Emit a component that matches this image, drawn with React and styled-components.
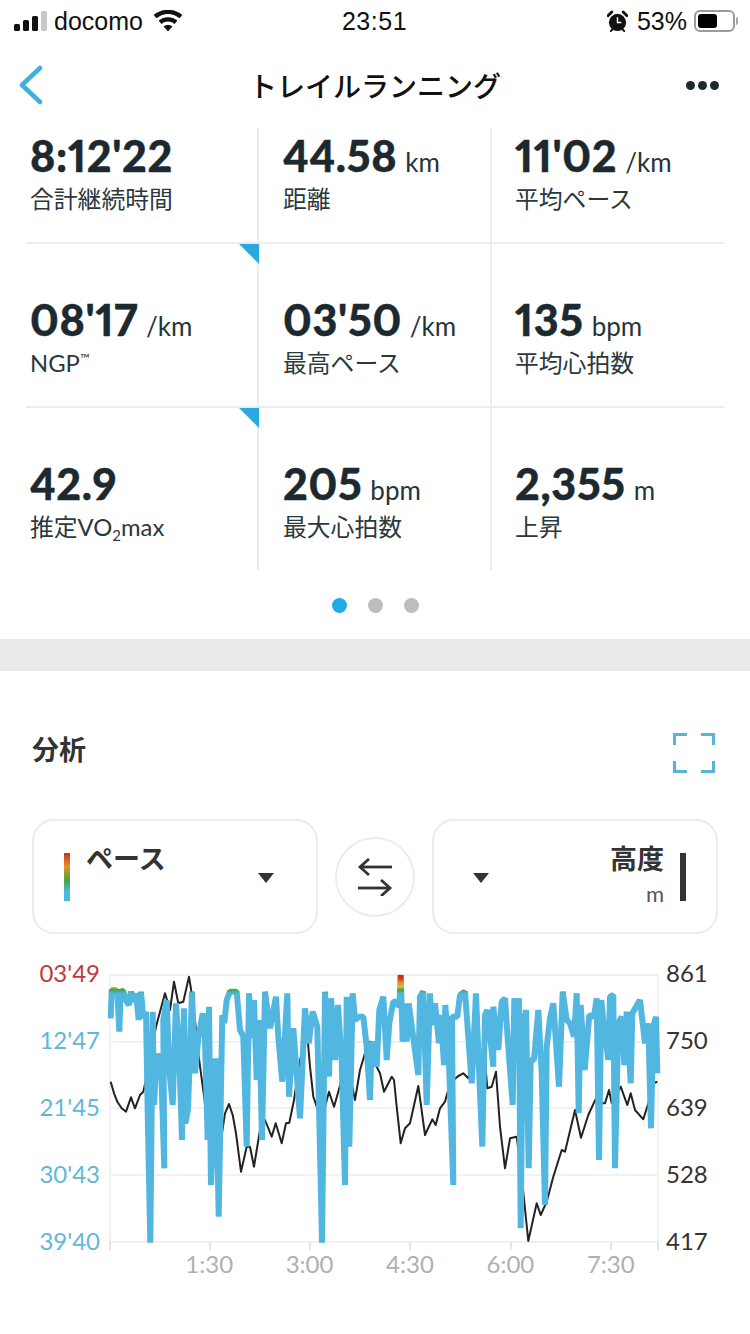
import styled, { createGlobalStyle } from "styled-components"

const GlobalStyle = createGlobalStyle`
    html, body {
        margin: 0;
        padding: 0;
        background: #fff;
    }
    * {
        box-sizing: border-box;
    }
`

const SANS = `Lato, "Noto Sans CJK JP", sans-serif`
const CJK = `"Noto Sans CJK JP", sans-serif`

const Page = styled.div`
    width: 750px;
    height: 1334px;
    overflow: hidden;
    background: #fff;
    font-family: ${SANS};
    color: #1c2a30;
`

const StatusBar = styled.div`
    height: 42px;
    display: grid;
    grid-template-columns: 1fr auto 1fr;
    align-items: center;
    padding: 0 15px 0 14px;
    font-family: "Liberation Sans", sans-serif;
    font-size: 25px;
    color: #111;
`
const StatusLeft = styled.div`
    display: flex;
    align-items: center;
`
const StatusRight = styled.div`
    display: flex;
    align-items: center;
    justify-content: flex-end;
`
const Signal = styled.div`
    display: flex;
    align-items: flex-end;
    gap: 3px;
    height: 20px;
    margin-right: 7px;
`
const SignalBar = styled.span`
    width: 6px;
    height: ${(p) => p.$h}px;
    border-radius: 1.5px;
    background: ${(p) => (p.$off ? "#c8c8c8" : "#111")};
`
const Carrier = styled.span`
    margin-right: 10px;
`
const Clock = styled.span`
    font-weight: 500;
    letter-spacing: 0.5px;
`
const Percent = styled.span`
    margin: 0 7px 0 9px;
`
const Battery = styled.div`
    position: relative;
    width: 41px;
    height: 22px;
    border: 2px solid #9a9a9a;
    border-radius: 6px;
    padding: 2px;
    &::after {
        content: "";
        position: absolute;
        right: -5px;
        top: 5px;
        width: 2px;
        height: 8px;
        border-radius: 0 2px 2px 0;
        background: #aaa;
    }
`
const BatteryFill = styled.div`
    width: 19px;
    height: 100%;
    border-radius: 3px;
    background: #000;
`

const NavBar = styled.div`
    height: 86px;
    display: grid;
    grid-template-columns: 1fr auto 1fr;
    align-items: center;
    padding: 0 31px;
    & > svg {
        margin-left: -13px;
    }
`
const NavEnd = styled.div`
    display: flex;
    justify-content: flex-end;
`
const NavTitle = styled.div`
    font-family: ${CJK};
    font-size: 28px;
    font-weight: 500;
    color: #111;
`
const MoreDots = styled.div`
    display: flex;
    gap: 3px;
    & span {
        width: 9px;
        height: 9px;
        border-radius: 50%;
        background: #1c2a30;
    }
`

const Grid = styled.div`
    margin: 0 26px;
`
const Row = styled.div`
    display: grid;
    grid-template-columns: 233px 233px 232px;
    height: ${(p) => p.$h}px;
    border-bottom: ${(p) => (p.$last ? "none" : "2px solid #ececec")};
`
const Cell = styled.div`
    position: relative;
    display: flex;
    flex-direction: column;
    justify-content: flex-end;
    padding: 0 0 ${(p) => p.$pb}px ${(p) => (p.$first ? 4 : p.$end ? 23 : 24)}px;
    border-right: ${(p) => (p.$end ? "none" : "2px solid #ececec")};
`
const Corner = styled.div`
    position: absolute;
    top: 0;
    right: -2px;
    width: 20px;
    height: 20px;
    background: #2aa9e0;
    clip-path: polygon(0 0, 100% 0, 100% 100%);
`
const ValueLine = styled.div`
    display: flex;
    align-items: baseline;
    gap: 8px;
    height: 44px;
    line-height: 44px;
    margin-bottom: 5px;
`
const Value = styled.span`
    font-size: 43px;
    font-weight: 900;
    letter-spacing: 0.7px;
    font-variant-numeric: proportional-nums;
    -webkit-text-stroke: 0.4px #1c2a30;
`
const Unit = styled.span`
    font-size: 26px;
    color: #26343a;
`
const Label = styled.div`
    font-size: 23.8px;
    line-height: 32px;
    color: #2b383d;
    & sup {
        font-size: 13px;
        line-height: 0;
        vertical-align: 9px;
    }
    & sub {
        font-size: 15px;
        line-height: 0;
        vertical-align: -5px;
    }
`

const Pager = styled.div`
    height: 69px;
    display: flex;
    align-items: center;
    justify-content: center;
    gap: 21px;
    padding-top: 1px;
`
const PagerDot = styled.span`
    width: 15px;
    height: 15px;
    border-radius: 50%;
    background: ${(p) => (p.$active ? "#23a9e6" : "#bdbdbd")};
`
const Band = styled.div`
    height: 32px;
    background: #ebebeb;
`

const SectionHead = styled.div`
    height: 149px;
    display: flex;
    align-items: center;
    justify-content: space-between;
    padding: 17px 35px 11px 32px;
    & svg {
        margin-top: 8px;
    }
`
const SectionTitle = styled.div`
    font-family: ${CJK};
    font-size: 27px;
    font-weight: 700;
    color: #333;
`

const Selectors = styled.div`
    display: flex;
    align-items: center;
    gap: 17px;
    padding: 0 32px;
    margin-top: -1px;
`
const SelectCard = styled.div`
    flex: 1;
    height: 115px;
    display: flex;
    align-items: center;
    gap: 16px;
    padding: 0 30px;
    border: 2px solid #ececec;
    border-radius: 22px;
    color: #333;
`
const ColorBar = styled.div`
    flex: none;
    width: ${(p) => p.$w}px;
    height: 48px;
    background: ${(p) =>
        p.$pace
            ? "linear-gradient(#c8301e 0%, #e8902a 28%, #3fa648 58%, #4cb8dc 80%)"
            : "#333"};
`
const SelectText = styled.div`
    flex: 1;
    height: 62px;
    margin-bottom: 2px;
    display: flex;
    flex-direction: column;
    justify-content: space-between;
    text-align: ${(p) => (p.$right ? "right" : "left")};
`
const SelectName = styled.div`
    font-family: ${CJK};
    font-size: 27px;
    line-height: 26px;
    font-weight: 700;
`
const SelectUnit = styled.div`
    font-size: 22px;
    line-height: 26px;
    color: #555;
`
const Caret = styled.div`
    flex: none;
    width: 0;
    height: 0;
    margin: 2px ${(p) => (p.$right ? 12 : 0)}px 0 ${(p) => (p.$left ? 9 : 0)}px;
    border-left: 8px solid transparent;
    border-right: 8px solid transparent;
    border-top: 10px solid #333;
`
const SwapButton = styled.div`
    flex: none;
    width: 80px;
    height: 80px;
    display: flex;
    align-items: center;
    justify-content: center;
    border: 2px solid #ececec;
    border-radius: 50%;
`

const ChartRow = styled.div`
    display: flex;
    margin-top: 26px;
    height: 300px;
`
const AxisLabels = styled.div`
    flex: none;
    width: ${(p) => (p.$side === "left" ? 100 : 84)}px;
    height: 298px;
    margin-top: -2px;
    display: flex;
    flex-direction: column;
    justify-content: space-between;
    align-items: ${(p) => (p.$side === "left" ? "flex-end" : "flex-start")};
    font-size: 24px;
    line-height: 30px;
`
const AxisLabel = styled.span`
    color: ${(p) => p.$color};
`
const ChartSvg = styled.svg`
    flex: none;
    display: block;
    margin: 0 3px 0 5px;
`
const TimeAxis = styled.div`
    display: flex;
    padding-left: 159px;
    margin-top: -11px;
`
const TimeLabel = styled.span`
    width: 100.4px;
    text-align: center;
    font-size: 24px;
    line-height: 30px;
    color: #b0b0b0;
`

const ChevronIcon = () => (
    <svg width="26" height="40" viewBox="0 0 26 40" fill="none">
        <path d="M22 3 L4 20 L22 37" stroke="#3fb0dc" strokeWidth="4.5" strokeLinecap="round" strokeLinejoin="round" />
    </svg>
)

const WifiIcon = () => (
    <svg width="30" height="22" viewBox="0 0 30 22" fill="#111">
        <path d="M15 21.5 L10.6 16.4 C13 14.4 17 14.4 19.4 16.4 Z" />
        <path d="M8.4 13.9 L5.6 10.6 C10.8 6.1 19.2 6.1 24.4 10.6 L21.6 13.9 C17.7 10.6 12.3 10.6 8.4 13.9 Z" />
        <path d="M3.6 8.3 L0.6 4.9 C8.6 -1.9 21.4 -1.9 29.4 4.9 L26.4 8.3 C19.8 2.6 10.2 2.6 3.6 8.3 Z" />
    </svg>
)

const AlarmIcon = () => (
    <svg width="21" height="23" viewBox="0 0 22 24">
        <circle cx="11" cy="13" r="9" fill="#111" />
        <path d="M1 6 L5 2 M21 6 L17 2" stroke="#111" strokeWidth="3" strokeLinecap="round" />
        <path d="M4 22 L6 20 M18 22 L16 20" stroke="#111" strokeWidth="2" strokeLinecap="round" />
        <path d="M11 7.5 V13 H15" stroke="#fff" strokeWidth="1.5" fill="none" />
    </svg>
)

const ExpandIcon = () => (
    <svg width="42" height="40" viewBox="0 0 42 40" fill="none" stroke="#56b4d8" strokeWidth="3">
        <path d="M1.5 12 V1.5 H14" />
        <path d="M28 1.5 H40.5 V12" />
        <path d="M1.5 28 V38.5 H14" />
        <path d="M28 38.5 H40.5 V28" />
    </svg>
)

const SwapIcon = () => (
    <svg width="36" height="38" viewBox="0 0 36 38" fill="none" stroke="#333" strokeWidth="2.8">
        <path d="M35 9 H3" />
        <path d="M12 1 L3 9 L12 17" />
        <path d="M1 30 H33" />
        <path d="M24 22 L33 30 L24 38" />
    </svg>
)

// traced off the reference: [x, y] at 3x, first list from x=30, second from x=370
const BLUE_A = [242,175,245,90,255,90,262,95,268,215,272,90,280,95,290,125,297,135,303,95,310,125,318,100,326,180,333,95,340,175,348,155,354,505,361,848,368,155,372,435,380,280,386,330,392,280,403,625,400,180,410,120,418,330,428,435,438,130,447,260,456,540,462,145,466,490,474,450,486,95,495,340,505,235,518,160,525,240,533,540,537,140,543,675,557,295,566,770,577,165,583,190,590,120,600,95,620,95,630,210,640,230,650,560,657,100,665,235,672,120,680,360,688,180,696,540,705,95,720,205,738,110,745,230,757,365,772,100,777,410,790,205,810,475,825,145,836,250,848,155,862,200,876,848,885,95,897,350,903,115,915,300,924,135,935,305,945,675,950,110,958,560,968,100,975,180,988,170,1000,170,1010,260,1020,420]
const BLUE_B = [5,245,20,320,28,150,40,110,50,300,58,190,70,125,78,125,88,140,92,45,98,245,105,130,110,245,116,130,128,220,145,345,150,110,160,95,170,435,180,100,185,195,195,130,207,250,213,165,222,315,226,135,235,250,250,675,246,170,262,170,270,105,285,95,305,370,318,100,325,280,337,560,345,165,352,150,370,320,370,140,385,270,395,125,405,115,415,260,428,435,433,115,440,230,447,115,452,805,458,210,468,150,476,625,482,300,492,300,505,150,515,340,525,735,530,260,540,175,550,130,567,380,578,95,590,180,600,190,612,230,620,100,626,460,632,135,644,330,658,165,672,170,680,115,687,600,694,120,700,180,715,300,720,110,730,105,735,625,745,190,755,170,763,315,770,155,782,370,787,160,810,120,825,250,835,190,843,505,850,200,858,170,862,340]
const BLACK_A = [242,365,252,400,262,425,275,445,288,455,303,412,315,445,330,405,340,395,350,350,378,200,405,100,420,150,432,65,445,130,460,125,477,50,490,130,505,280,525,430,545,510,575,525,585,460,597,432,608,465,618,520,633,635,650,560,660,560,672,620,690,510,705,480,725,530,737,490,755,550,768,490,778,488,792,420,810,300,832,225,840,320,850,410,862,445,885,440,897,395,912,440,925,395,940,340,960,345,975,420,990,330,1005,280,1020,245]
const BLACK_B = [10,250,20,320,30,340,42,395,65,350,72,360,80,440,92,550,105,505,120,490,145,378,152,430,165,525,187,478,197,495,210,445,225,425,240,370,265,348,280,340,295,355,310,290,345,300,352,385,365,380,378,335,390,500,405,625,420,535,440,530,455,650,475,843,500,730,512,765,530,725,550,650,575,570,585,575,615,450,633,533,655,465,678,415,695,430,705,430,717,390,725,430,752,380,772,435,782,400,795,450,820,478,835,430,850,370,862,365]

const toPoints = (list, offset) => {
    const pts = []
    for (let i = 0; i < list.length; i += 2) {
        pts.push(`${(offset + list[i] / 3).toFixed(1)},${(960 + list[i + 1] / 3).toFixed(1)}`)
    }
    return pts.join(" ")
}
const bluePoints = toPoints(BLUE_A, 30) + " " + toPoints(BLUE_B, 370)
const blackPoints = toPoints(BLACK_A, 30) + " " + toPoints(BLACK_B, 370)

const GRID_Y = [975, 1042, 1108, 1175, 1242]
const TICK_X = [110, 210, 310, 410, 511, 611, 658]

const Chart = () => (
    <ChartSvg width="558" height="300" viewBox="105 960 558 300">
        <defs>
            <linearGradient id="pace" gradientUnits="userSpaceOnUse" x1="0" y1="975" x2="0" y2="1242">
                <stop offset="0.01" stopColor="#c8301e" />
                <stop offset="0.03" stopColor="#e8902a" />
                <stop offset="0.045" stopColor="#d8c040" />
                <stop offset="0.055" stopColor="#3fa648" />
                <stop offset="0.07" stopColor="#52b7e0" />
                <stop offset="1" stopColor="#52b7e0" />
            </linearGradient>
        </defs>
        {GRID_Y.map((y) => (
            <line key={y} x1="110" x2="658" y1={y} y2={y} stroke="#ececec" strokeWidth="1.5" />
        ))}
        <line x1="110" x2="110" y1="975" y2="1250" stroke="#ececec" strokeWidth="1.5" />
        <line x1="658" x2="658" y1="975" y2="1250" stroke="#ececec" strokeWidth="1.5" />
        {TICK_X.map((x) => (
            <line key={x} x1={x} x2={x} y1="1242" y2="1250" stroke="#dedede" strokeWidth="1.5" />
        ))}
        <polyline points={blackPoints} fill="none" stroke="#222" strokeWidth="2" strokeLinejoin="round" />
        <polyline points={bluePoints} fill="none" stroke="url(#pace)" strokeWidth="6" strokeLinejoin="bevel" />
    </ChartSvg>
)

const STATS = [
    {
        h: 116, pb: 27, cells: [
            { value: "8:12'22", label: "合計継続時間" },
            { value: "44.58", unit: "km", label: "距離" },
            { value: "11'02", unit: "/km", label: "平均ペース" },
        ],
    },
    {
        h: 164, pb: 27, cells: [
            { value: "08'17", unit: "/km", label: <>NGP<sup>™</sup></>, corner: true },
            { value: "03'50", unit: "/km", label: "最高ペース" },
            { value: "135", unit: "bpm", label: "平均心拍数" },
        ],
    },
    {
        h: 162, pb: 27, last: true, cells: [
            { value: "42.9", label: <>推定VO<sub>2</sub>max</>, corner: true },
            { value: "205", unit: "bpm", label: "最大心拍数" },
            { value: "2,355", unit: "m", label: "上昇" },
        ],
    },
]

const LEFT_AXIS = ["03'49", "12'47", "21'45", "30'43", "39'40"]
const RIGHT_AXIS = ["861", "750", "639", "528", "417"]
const TIMES = ["1:30", "3:00", "4:30", "6:00", "7:30"]

export default function App() {
    return <Page>
        <GlobalStyle />
        <StatusBar>
            <StatusLeft>
                <Signal>
                    <SignalBar $h={7} />
                    <SignalBar $h={11} />
                    <SignalBar $h={15} />
                    <SignalBar $h={20} $off />
                </Signal>
                <Carrier>docomo</Carrier>
                <WifiIcon />
            </StatusLeft>
            <Clock>23:51</Clock>
            <StatusRight>
                <AlarmIcon />
                <Percent>53%</Percent>
                <Battery><BatteryFill /></Battery>
            </StatusRight>
        </StatusBar>
        <NavBar>
            <ChevronIcon />
            <NavTitle>トレイルランニング</NavTitle>
            <NavEnd>
                <MoreDots><span /><span /><span /></MoreDots>
            </NavEnd>
        </NavBar>
        <Grid>
            {STATS.map((row, r) => (
                <Row key={r} $h={row.h} $last={row.last}>
                    {row.cells.map((cell, c) => (
                        <Cell key={c} $pb={row.pb} $first={c === 0} $end={c === 2}>
                            {cell.corner && <Corner />}
                            <ValueLine>
                                <Value>{cell.value}</Value>
                                {cell.unit && <Unit>{cell.unit}</Unit>}
                            </ValueLine>
                            <Label>{cell.label}</Label>
                        </Cell>
                    ))}
                </Row>
            ))}
        </Grid>
        <Pager>
            <PagerDot $active />
            <PagerDot />
            <PagerDot />
        </Pager>
        <Band />
        <SectionHead>
            <SectionTitle>分析</SectionTitle>
            <ExpandIcon />
        </SectionHead>
        <Selectors>
            <SelectCard>
                <ColorBar $w={6} $pace />
                <SelectText>
                    <SelectName>ペース</SelectName>
                </SelectText>
                <Caret $right />
            </SelectCard>
            <SwapButton><SwapIcon /></SwapButton>
            <SelectCard>
                <Caret $left />
                <SelectText $right>
                    <SelectName>高度</SelectName>
                    <SelectUnit>m</SelectUnit>
                </SelectText>
                <ColorBar $w={6} />
            </SelectCard>
        </Selectors>
        <ChartRow>
            <AxisLabels $side="left">
                {LEFT_AXIS.map((t, i) => (
                    <AxisLabel key={t} $color={i === 0 ? "#c23a3a" : "#62b7d6"}>{t}</AxisLabel>
                ))}
            </AxisLabels>
            <Chart />
            <AxisLabels $side="right">
                {RIGHT_AXIS.map((t) => (
                    <AxisLabel key={t} $color="#333">{t}</AxisLabel>
                ))}
            </AxisLabels>
        </ChartRow>
        <TimeAxis>
            {TIMES.map((t) => <TimeLabel key={t}>{t}</TimeLabel>)}
        </TimeAxis>
    </Page>
}
